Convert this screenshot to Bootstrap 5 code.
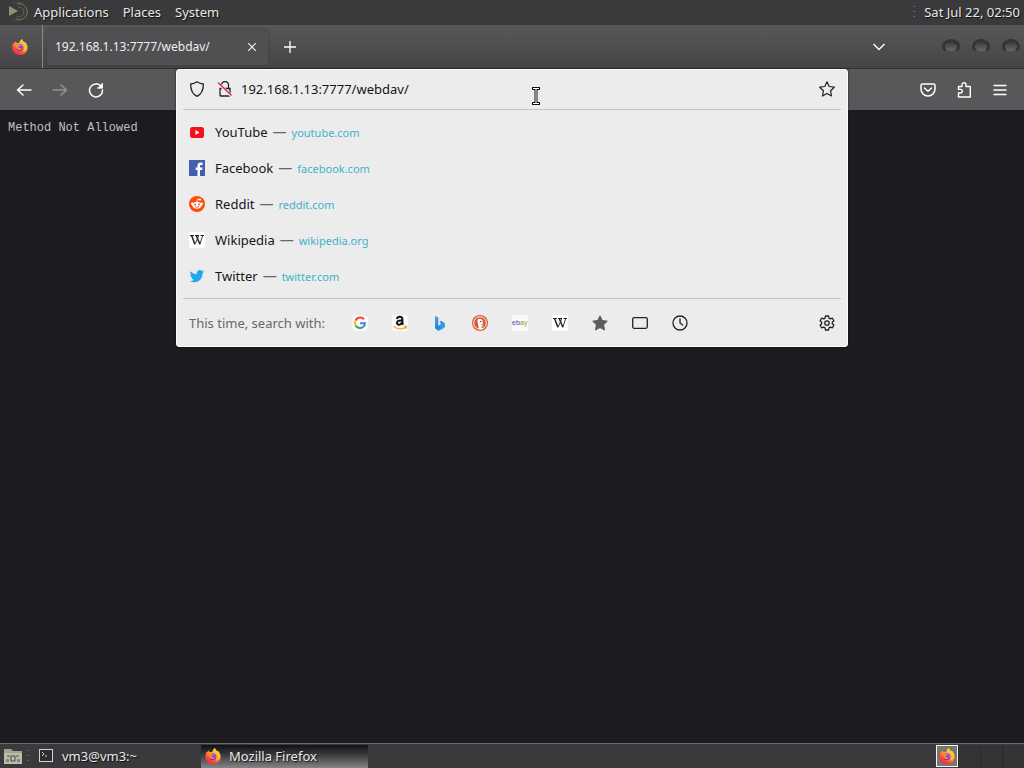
<!DOCTYPE html>
<html lang="en">
<head>
<meta charset="utf-8">
<meta name="viewport" content="width=device-width, initial-scale=1">
<title>192.168.1.13:7777/webdav/</title>
<link href="https://cdn.jsdelivr.net/npm/bootstrap@5.3.0/dist/css/bootstrap.min.css" rel="stylesheet">
<style>
body { font-family: "Noto Sans", sans-serif; font-size: 13px; line-height: 20px; background: #1c1b20; color: #eee; }
svg { display: block; flex: none; }
button { background: none; border: 0; padding: 0; color: inherit; display: flex; align-items: center; justify-content: center; flex: none; }
a { color: inherit; text-decoration: none; }
.desk-panel { height: 25px; background: #3a3a3c; color: #e8e8e8; }
.desk-panel button { text-shadow: 1px 1px 1px #111; }
.top-panel { padding-bottom: 2px; }
.menu-list { gap: 14px; margin-left: 6px; }
.grip { width: 4px; height: 16px; background: radial-gradient(circle, #666 1px, transparent 1px) 0 0 / 4px 5px; }
.tab-strip { height: 44px; background: linear-gradient(#58585a, #454547); border-bottom: 1px solid #303033; }
.pinned { width: 43px; padding-right: 2px; border-right: 1px solid #88888a; }
.site-tab { width: 221px; height: 36px; background: #505053; border-radius: 3px; box-shadow: 0 0 3px #3c3c3f; font-size: 12px; }
.tab-list { margin-right: 56px; }
.wm-buttons { gap: 12px; padding-right: 4px; }
.wm-dot { width: 18px; height: 15px; border-radius: 50%; background: linear-gradient(#3a3a3d, #6a6a6d); border: 3px solid #343437; border-bottom-color: #4d4d50; }
.tool-bar { height: 41px; background: #58585a; }
.tool-side { width: 176px; padding: 0 6px; }
.tool-side button { width: 36px; height: 36px; }
.url-popup { position: absolute; top: 0; left: 0; right: 0; background: #ececec; color: #151519; border: 1px solid #fafafa; border-radius: 3px; box-shadow: 0 0 2px #111; z-index: 2; }
.url-row { height: 40px; border-bottom: 1px solid #c3c3c3; margin: 0 6px; padding: 0 6px 2px; }
.url-row input { border: 0; background: none; outline: 0; padding: 0; color: #151519; min-width: 0; }
.result { height: 36px; padding: 0 12px; }
.result-icon { width: 26px; }
.dash { color: #666; margin: 0 5px; font-size: 14px; }
.domain { color: #42b1c9; font-size: 11px; padding-top: 1px; }
.engines { height: 48px; border-top: 1px solid #c3c3c3; margin: 0 6px; padding: 0 6px; color: #222; }
.engines button { width: 40px; height: 32px; }
.engines .gear { width: 16px; }
.engine-label { width: 151px; color: #68686b; }
.page-text { font: 12px/16px "Liberation Mono", monospace; color: #c0c0c4; padding: 10px 8px; margin: 0; }
.task-bar { border-top: 1px solid #6a6a6d; }
.task-button { width: 167px; height: 23px; }
.task-button svg { margin-right: 8px; }
.task-active { background: linear-gradient(#111113, #3d3d40 45%, #858588); }
.workspace { width: 22px; height: 23px; border-left: 1px solid #29292b; background: #343437; }
.workspace-on { background: #77776f; border: 1px solid #f4f4f4; width: 22px; height: 22px; }
.pointer-mark { position: absolute; left: 53%; top: 17px; }
</style>
<script src="https://cdn.jsdelivr.net/npm/bootstrap@5.3.0/dist/js/bootstrap.bundle.min.js"></script>
</head>
<body class="min-vh-100 d-flex flex-column overflow-hidden">
<svg width="0" height="0" class="position-absolute" aria-hidden="true">
  <defs>
    <linearGradient id="flame" x1=".8" y1="0" x2=".2" y2="1"><stop offset="0" stop-color="#fff04a"/><stop offset=".4" stop-color="#ffa42c"/><stop offset=".7" stop-color="#ff4b3d"/><stop offset="1" stop-color="#e82055"/></linearGradient>
    <linearGradient id="globe" x1=".6" y1="0" x2=".3" y2="1"><stop offset="0" stop-color="#a75cf5"/><stop offset="1" stop-color="#5038b8"/></linearGradient>
    <symbol id="firefox" viewBox="0 0 16 16">
      <path fill="url(#flame)" d="M10 0c.2 1.500 1.300 2.300 2.400 3.500l.4-.8c1.800 1.600 3.100 4 2.800 6.500C15.200 13.200 12 16 8 16S.6 13 .3 9.200C.1 6.600 1.100 4.300 2.100 2.900l.3 1.600L4 2.300l.4 1.800c1-.3 2-.2 2.700.2C7.500 2.500 8.400.8 10 0z"/>
      <circle cx="7.800" cy="8.400" r="3.500" fill="url(#globe)"/>
      <path fill="#ff8a26" d="M2.300 5.500c1.700-1 3.500-.8 4.900.4l1.600.2c-.3.900-1.100 1.200-2 1.400-.5.500-.4 1.100.2 1.600 1 .7 2.100-.2 3.100.5-.8 1.400-2.400 1.900-3.900 1.200C4.100 10 4 7.500 2.300 5.500z"/>
      <path fill="#ffc637" d="M10 0c-.2 3 2.700 4.200 2.800 7.800.1 2.700-1.500 4.500-3.400 5 3.800-.1 5.600-2.500 5-5.700-.5-2.800-3.800-4-4.400-7.100z"/>
    </symbol>
    <symbol id="wiki" viewBox="0 0 16 16"><rect width="16" height="16" rx="2" fill="#fff"/><path fill="none" stroke="#222" d="M1 3.500h4M6 3.500h4M11.500 3.500H15"/><path fill="none" stroke="#222" stroke-width="1.500" d="M2.700 3.700l3.100 8.300M7.300 3.700l3.500 8.300"/><path fill="none" stroke="#222" stroke-width=".9" d="M5.800 12.500l3-6.500.8-2.500M10.800 12.500l2.900-9"/></symbol>
  </defs>
</svg>

<header class="desk-panel top-panel d-flex align-items-center">
  <svg class="ms-2" width="20" height="20" viewBox="0 0 20 20" fill="none"><path d="M1 4l9 5-9 5z" fill="#87966b"/><path d="M9 2a8 8 0 1 1-1 15" stroke="#718653"/><path d="M10 5a5 5 0 1 1-2 9" stroke="#596844"/><path d="M5 1a9 9 0 0 1 12 4M4 17a9 9 0 0 0 7 2" stroke="#53613e" stroke-dasharray="2 1"/></svg>
  <nav class="menu-list d-flex flex-grow-1" aria-label="Desktop">
    <button type="button">Applications</button><button type="button">Places</button><button type="button">System</button>
  </nav>
  <span class="grip me-2"></span><button type="button" class="me-1">Sat Jul 22, 02:50</button>
</header>

<div class="tab-strip d-flex align-items-center">
  <div class="pinned h-100 d-flex align-items-center justify-content-center"><svg width="16" height="16"><use href="#firefox"/></svg></div>
  <div class="site-tab d-flex align-items-center ms-1 ps-2">
    <a href="#" class="flex-grow-1">192.168.1.13:7777/webdav/</a>
    <button type="button" class="me-2 px-1" aria-label="Close tab"><svg width="8" height="8" viewBox="0 0 8 8" stroke="#eee" stroke-width="1.200"><path d="M0 0l8 8M8 0L0 8"/></svg></button>
  </div>
  <button type="button" class="ms-3" aria-label="New tab"><svg width="12" height="12" viewBox="0 0 12 12" stroke="#fff" stroke-width="1.300"><path d="M6 0v12M0 6h12"/></svg></button>
  <button type="button" class="tab-list ms-auto" aria-label="List tabs"><svg width="14" height="8" viewBox="0 0 14 8" fill="none" stroke="#fff" stroke-width="1.400"><path d="M1.500 1L7 6.500 12.500 1"/></svg></button>
  <div class="wm-buttons d-flex"><button type="button" class="wm-dot" aria-label="Minimize"></button><button type="button" class="wm-dot" aria-label="Maximize"></button><button type="button" class="wm-dot" aria-label="Close"></button></div>
</div>

<div class="tool-bar d-flex align-items-center">
  <div class="tool-side d-flex flex-shrink-0">
    <button type="button" aria-label="Back"><svg width="16" height="16" viewBox="0 0 16 16" fill="none" stroke="#fff" stroke-width="1.500" stroke-linecap="round" stroke-linejoin="round"><path d="M15 8H1.500M7 3L1.500 8 7 13"/></svg></button>
    <button type="button" aria-label="Forward"><svg width="16" height="16" viewBox="0 0 16 16" fill="none" stroke="#929294" stroke-width="1.500" stroke-linecap="round" stroke-linejoin="round"><path d="M1 8h13.500M9 3L14.500 8 9 13"/></svg></button>
    <button type="button" aria-label="Reload"><svg width="16" height="16" viewBox="0 0 16 16" fill="none" stroke="#fff" stroke-width="1.500" stroke-linecap="round"><path d="M13 4.200A6.500 6.500 0 1 0 14.500 8"/><path d="M14.500 1.500v4.700H9.800z" fill="#fff" stroke-width=".8" stroke-linejoin="round"/></svg></button>
  </div>
  <div class="position-relative flex-grow-1 align-self-stretch">
    <div class="url-popup">
      <div class="url-row d-flex align-items-center">
        <svg width="16" height="16" viewBox="0 0 16 16" fill="none" stroke="#222" stroke-width="1.300"><path d="M8 .8c2 1.500 4 2 6.300 2.200C14.500 9 12.500 13.200 8 15.300 3.500 13.200 1.500 9 1.700 3 4 2.800 6 2.300 8 .8z" stroke-linejoin="round"/></svg>
        <svg class="ms-2" width="24" height="16" viewBox="-4 0 24 16" fill="none" stroke="#222" stroke-width="1.300"><path d="M4.500 7V4a3.500 3.500 0 0 1 7 0v3M3 7.500h10v6.700c0 .5-.4.800-.8.800H3.800a.8.800 0 0 1-.8-.8z"/><path d="M1 2l13.500 13" stroke="#ececec" stroke-width="3"/><path d="M1 1.500l13.500 13" stroke="#e42a4d" stroke-width="1.400"/></svg>
        <input class="flex-grow-1 ms-1" aria-label="Address" value="192.168.1.13:7777/webdav/">
        <button type="button" aria-label="Bookmark"><svg width="16" height="16" viewBox="0 0 16 16" fill="none" stroke="#222" stroke-width="1.200" stroke-linejoin="round"><path d="M8 .8l2.200 4.700 5.100.7-3.700 3.600.9 5.200L8 12.500 3.500 15l.9-5.200L.7 6.200l5.100-.7z"/></svg></button>
      </div>
      <div class="py-1">
        <a href="#" class="result d-flex align-items-center"><span class="result-icon"><svg width="16" height="16" viewBox="0 0 16 16"><rect x="1" y="3" width="14" height="11" rx="2.500" fill="#f6101c"/><path d="M6.500 6v5l4-2.500z" fill="#fff"/></svg></span>YouTube<span class="dash">—</span><span class="domain">youtube.com</span></a>
        <a href="#" class="result d-flex align-items-center"><span class="result-icon"><svg width="16" height="16" viewBox="0 0 16 16"><path d="M0 0h16v16H0z" fill="#4260ae"/><path d="M8.500 16v-6H6.700V7.600h1.800V6c0-2.300 1.200-3.400 3.300-3.400l1.800.1v2.200h-1.300c-1 0-1.300.4-1.300 1.200v1.500h2.500l-.4 2.400H11v6z" fill="#fff"/></svg></span>Facebook<span class="dash">—</span><span class="domain">facebook.com</span></a>
        <a href="#" class="result d-flex align-items-center"><span class="result-icon"><svg width="16" height="16" viewBox="0 0 16 16"><circle cx="8" cy="8" r="8" fill="#ff4a0a"/><g fill="#fff"><ellipse cx="8" cy="9.200" rx="4.700" ry="3.500"/><circle cx="3.300" cy="7.800" r="1.300"/><circle cx="12.700" cy="7.800" r="1.300"/><circle cx="11" cy="3.600" r="1.100"/></g><path d="M8 6l.6-3 2.500.6" fill="none" stroke="#fff" stroke-width=".8"/><path d="M6 10.700q2 1.300 4 0" fill="none" stroke="#ff4a0a" stroke-width=".8"/><g fill="#ff4a0a"><circle cx="6" cy="8.500" r="1"/><circle cx="10" cy="8.500" r="1"/></g></svg></span>Reddit<span class="dash">—</span><span class="domain">reddit.com</span></a>
        <a href="#" class="result d-flex align-items-center"><span class="result-icon"><svg width="16" height="16"><use href="#wiki"/></svg></span>Wikipedia<span class="dash">—</span><span class="domain">wikipedia.org</span></a>
        <a href="#" class="result d-flex align-items-center"><span class="result-icon"><svg width="16" height="16" viewBox="0 0 16 16"><path d="M15 3.800l-1.500 1.400c.2 5.200-3.500 9-8.200 9-1.600 0-3.100-.4-4.300-1.200 1.500.1 3-.3 4.100-1.200-1.300 0-2.200-.8-2.600-2h1.200C2.300 9.500 1.400 8.300 1.400 7c.4.200.8.300 1.200.3-1.300-.9-1.600-2.600-.8-4 1.500 1.800 3.500 2.900 5.900 3C7.300 4 8.800 2 10.800 2c.8 0 1.500.3 2 .8l1.900-.7-1.200 1.600z" fill="#20a7ed"/></svg></span>Twitter<span class="dash">—</span><span class="domain">twitter.com</span></a>
      </div>
      <div class="engines d-flex align-items-center">
        <span class="engine-label">This time, search with:</span>
        <button type="button" aria-label="Google"><svg width="16" height="16" viewBox="0 0 16 16" fill="none" stroke-width="2"><rect width="16" height="16" rx="5" fill="#fafafa"/><path d="M12 4.300A5 5 0 0 0 3.600 5.500" stroke="#e94435"/><path d="M3.600 5.500a5 5 0 0 0 0 5" stroke="#fbbc05"/><path d="M3.600 10.500a5 5 0 0 0 7.700 1.300" stroke="#34a853"/><path d="M11.300 11.800A5 5 0 0 0 13 8.200H8" stroke="#4285f4"/></svg></button>
        <button type="button" aria-label="Amazon"><svg width="16" height="16" viewBox="0 0 16 16" fill="none"><rect width="16" height="16" rx="2" fill="#fafafa"/><path d="M5 4c.4-3 5.400-2.900 5.400.2v4.300l.9 1.200M10 5.500C6.800 5.200 5 6 5 8c0 2.300 4 2.300 5-.7" stroke="#111" stroke-width="2"/><path d="M1.500 11.300c3.800 3.200 9 3.200 12.800.6M12 11.200l2.600.2-.6 2.400" stroke="#f3ae24" stroke-width="1.300"/></svg></button>
        <button type="button" aria-label="Bing"><svg width="16" height="16" viewBox="0 0 16 16"><defs><linearGradient id="bing" x2="1" y2="1"><stop stop-color="#5aa4f2"/><stop offset=".5" stop-color="#2784e2"/><stop offset="1" stop-color="#45c0ee"/></linearGradient></defs><path d="M3 1l3.300 1.300v8.500L9 9.300 7.800 5.800c3 .6 5.400 2 5.400 4.600 0 1.800-1.200 2.700-2.900 3.700L6.300 16 3 13.300z" fill="url(#bing)"/></svg></button>
        <button type="button" aria-label="DuckDuckGo"><svg width="16" height="16" viewBox="0 0 16 16"><circle cx="8" cy="8" r="8" fill="#d95831"/><circle cx="8" cy="8" r="6.300" fill="none" stroke="#fff"/><path d="M7 13.800L5.500 7C5 4 7 3 9 4c2.200 1 2.200 3.500 1.300 5.500l1 4.300c-1.500.8-3 .7-4.300 0z" fill="#fff"/><circle cx="8.800" cy="6.500" r=".7" fill="#34445c"/><path d="M8.500 8.700l3.500-.4-.6 1.300H8.700z" fill="#f7b52c"/><path d="M9 11.500l3 .3-.7 1.500-2-.5z" fill="#63b55a"/></svg></button>
        <button type="button" aria-label="eBay"><svg width="16" height="16" viewBox="0 0 16 16"><rect width="16" height="16" fill="#fafafa"/><text y="10" font-size="7" font-family="Liberation Sans, sans-serif"><tspan x="0" fill="#7b3974">e</tspan><tspan x="4" fill="#3045b8">b</tspan><tspan x="8" fill="#a18c21">a</tspan><tspan x="12" fill="#86ac20">y</tspan></text></svg></button>
        <button type="button" aria-label="Wikipedia"><svg width="16" height="16"><use href="#wiki"/></svg></button>
        <button type="button" aria-label="Bookmarks"><svg width="16" height="16" viewBox="0 0 16 16"><path fill="#5b5b5d" stroke="#5b5b5d" stroke-linejoin="round" d="M8 .8l2.200 4.700 5.100.7-3.700 3.600.9 5.200L8 12.500 3.500 15l.9-5.200L.7 6.200l5.100-.7z"/></svg></button>
        <button type="button" aria-label="Tabs"><svg width="16" height="16" viewBox="0 0 16 16" fill="none" stroke="#222" stroke-width="1.300"><rect x=".7" y="2.700" width="14.600" height="10.600" rx="1.500"/></svg></button>
        <button type="button" aria-label="History"><svg width="16" height="16" viewBox="0 0 16 16" fill="none" stroke="#222" stroke-width="1.300" stroke-linecap="round"><circle cx="8" cy="8" r="7"/><path d="M8 3.800V8l2.700 2"/></svg></button>
        <button type="button" class="gear ms-auto" aria-label="Search settings"><svg width="16" height="16" viewBox="0 0 16 16" fill="none" stroke="#222" stroke-width="1.300" stroke-linejoin="round"><path d="M6.500 1h3l.5 2.100 1.300.8 2.100-.7 1.500 2.600-1.600 1.500v1.400l1.600 1.500-1.500 2.600-2.100-.7-1.300.8-.5 2.100h-3L6 12.900l-1.300-.8-2.100.7-1.500-2.600 1.600-1.500V7.300L1.100 5.800l1.500-2.600 2.100.7L6 3.100z"/><circle cx="8" cy="8" r="2.200"/></svg></button>
      </div>
      <svg class="pointer-mark" width="8" height="18" viewBox="0 0 8 18" fill="none"><path d="M0 1.500h8M4 1v16M0 16.500h8" stroke="#111" stroke-width="3"/><path d="M1 1.500h6M4 1.500v15M1 16.500h6" stroke="#fff"/></svg>
    </div>
  </div>
  <div class="tool-side d-flex flex-shrink-0 justify-content-end">
    <button type="button" aria-label="Save to Pocket"><svg width="16" height="16" viewBox="0 0 16 16" fill="none" stroke="#fff" stroke-width="1.500" stroke-linecap="round" stroke-linejoin="round"><path d="M2.500 2h11A1.500 1.500 0 0 1 15 3.500V7A7 7 0 0 1 1 7V3.500A1.500 1.500 0 0 1 2.500 2zM4.500 6L8 9.300 11.500 6"/></svg></button>
    <button type="button" aria-label="Extensions"><svg width="16" height="16" viewBox="0 0 16 16" fill="none" stroke="#fff" stroke-width="1.400" stroke-linejoin="round"><path d="M2.500 15V11h2a1.800 1.800 0 0 0 0-3.600H2.500V4.500H6V2.800a2 2 0 0 1 4 0v1.700h4.300V15z"/></svg></button>
    <button type="button" aria-label="Menu"><svg width="14" height="12" viewBox="0 0 14 12" stroke="#fff" stroke-width="1.400" stroke-linecap="round"><path d="M1 1.500h12M1 6h12M1 10.500h12"/></svg></button>
  </div>
</div>

<main class="flex-grow-1"><pre class="page-text">Method Not Allowed</pre></main>

<footer class="desk-panel task-bar d-flex align-items-center">
  <button type="button" class="ms-1" aria-label="Show files"><svg width="18" height="18" viewBox="0 0 18 18"><path d="M0 2h7l2 2h9v13H0z" fill="#a2a392"/><path d="M0 6h18v11H0z" fill="#bbbcaa"/><path d="M3 8h3v2H3zM12 8h3v2h-3zM2 12h3v3H2zM13 12h3v3h-3z" fill="#858675"/><path d="M7 9h4v5H7z" fill="none" stroke="#4b4c45"/></svg></button>
  <span class="grip mx-1"></span>
  <button type="button" class="task-button justify-content-start ps-1"><svg width="16" height="14" viewBox="0 0 16 14" fill="none" stroke="#d2d2d2"><rect x="1.500" y=".5" width="13" height="12" fill="#28302f"/><path d="M4 3l2 2-2 2M7 7h2"/></svg>vm3@vm3:~</button>
  <button type="button" class="task-button task-active justify-content-start ps-1"><svg width="16" height="16"><use href="#firefox"/></svg>Mozilla Firefox</button>
  <div class="d-flex align-items-center ms-auto"><button type="button" class="workspace-on" aria-label="Workspace 1"><svg width="16" height="16"><use href="#firefox"/></svg></button><button type="button" class="workspace" aria-label="Workspace 2"></button><button type="button" class="workspace" aria-label="Workspace 3"></button><button type="button" class="workspace" aria-label="Workspace 4"></button></div>
</footer>
</body>
</html>
